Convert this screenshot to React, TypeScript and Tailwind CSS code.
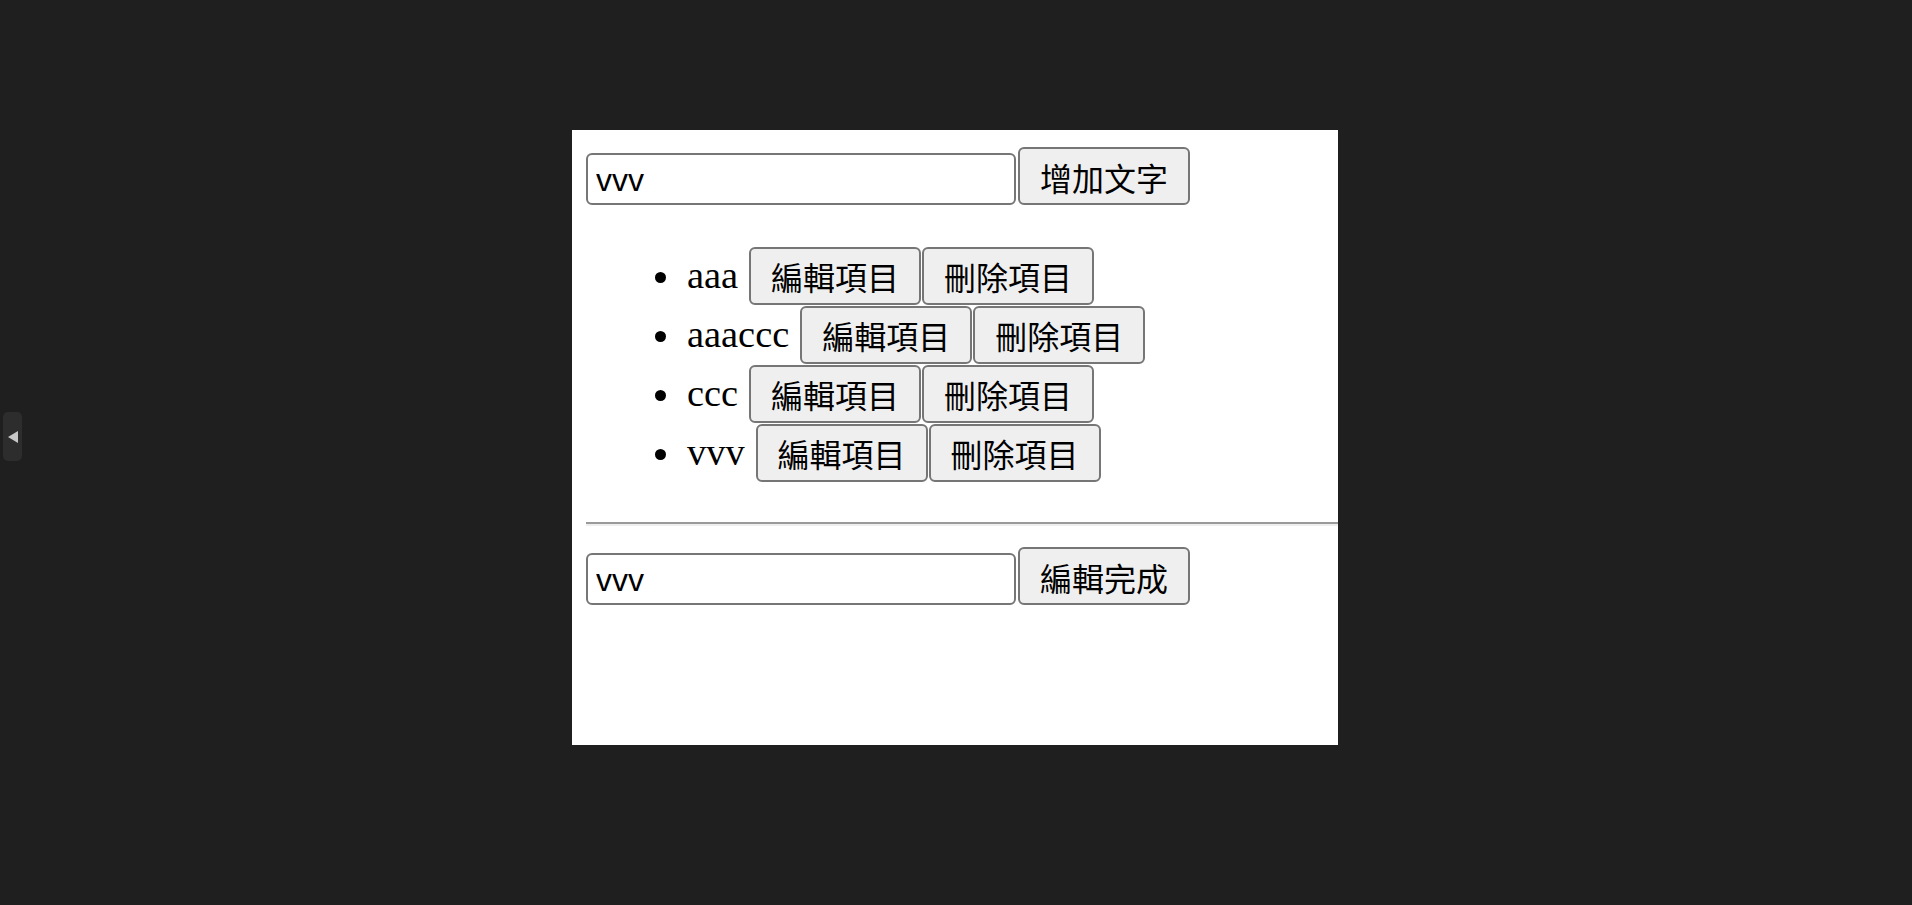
import { useState } from "react";

const btn =
  "h-[58px] w-[172px] shrink-0 rounded-[6px] border-2 border-[#767676] bg-[#efefef] pt-[7px] text-[32px] leading-none text-black font-['Liberation_Sans','Noto_Sans_CJK_TC',sans-serif]";

const field =
  "h-[52px] w-[430px] shrink-0 rounded-[6px] border-2 border-[#767676] bg-white pl-[8px] pt-[3px] text-[32px] text-black outline-none font-['Liberation_Sans','Noto_Sans_CJK_TC',sans-serif]";

export default function App() {
  const [items, setItems] = useState<string[]>(["aaa", "aaaccc", "ccc", "vvv"]);
  const [text, setText] = useState("vvv");
  const [editIndex, setEditIndex] = useState<number>(3);
  const [editText, setEditText] = useState("vvv");

  function addItem() {
    if (!text) return;
    setItems([...items, text]);
  }

  function finishEdit() {
    if (editIndex < 0) return;
    setItems(items.map((item, i) => (i === editIndex ? editText : item)));
  }

  return (
    <div className="relative flex min-h-[905px] justify-center bg-[#1f1f1f] pr-[2px] pt-[130px]">
      {/* side handle */}
      <div className="absolute left-[3px] top-[412px] flex h-[49px] w-[19px] items-center justify-center rounded-[5px] bg-[#2d2d2d]">
        <svg width="10" height="12" viewBox="0 0 10 12">
          <polygon points="10,0 10,12 0,6" fill="#c8c8c8" />
        </svg>
      </div>

      <div className="h-[615px] w-[766px] overflow-hidden bg-white pl-[14px] pt-[17px]">
        <div className="flex items-end">
          <input className={field} value={text} onChange={e => setText(e.target.value)} />
          <button className={`${btn} ml-[2px]`} onClick={addItem}>
            增加文字
          </button>
        </div>

        <ul className="mt-[41px]">
          {items.map((item, i) => (
            <li key={i} className="flex h-[59px] items-center">
              <span className="ml-[69px] mt-[4px] h-[11px] w-[11px] shrink-0 rounded-full bg-black" />
              <span className="ml-[21px] whitespace-nowrap text-[38.4px] leading-none text-black font-['Liberation_Serif',serif]">
                {item}
              </span>
              <button
                className={`${btn} ml-[11px]`}
                onClick={() => {
                  setEditIndex(i);
                  setEditText(item);
                }}
              >
                編輯項目
              </button>
              <button
                className={`${btn} ml-[1px]`}
                onClick={() => setItems(items.filter((_, j) => j !== i))}
              >
                刪除項目
              </button>
            </li>
          ))}
        </ul>

        <hr className="mt-[40px] h-0 border-0 border-t-2 border-b-2 border-t-[#9a9a9a] border-b-[#eeeeee]" />

        <div className="mt-[21px] flex items-end">
          <input className={field} value={editText} onChange={e => setEditText(e.target.value)} />
          <button className={`${btn} ml-[2px]`} onClick={finishEdit}>
            編輯完成
          </button>
        </div>
      </div>
    </div>
  );
}
